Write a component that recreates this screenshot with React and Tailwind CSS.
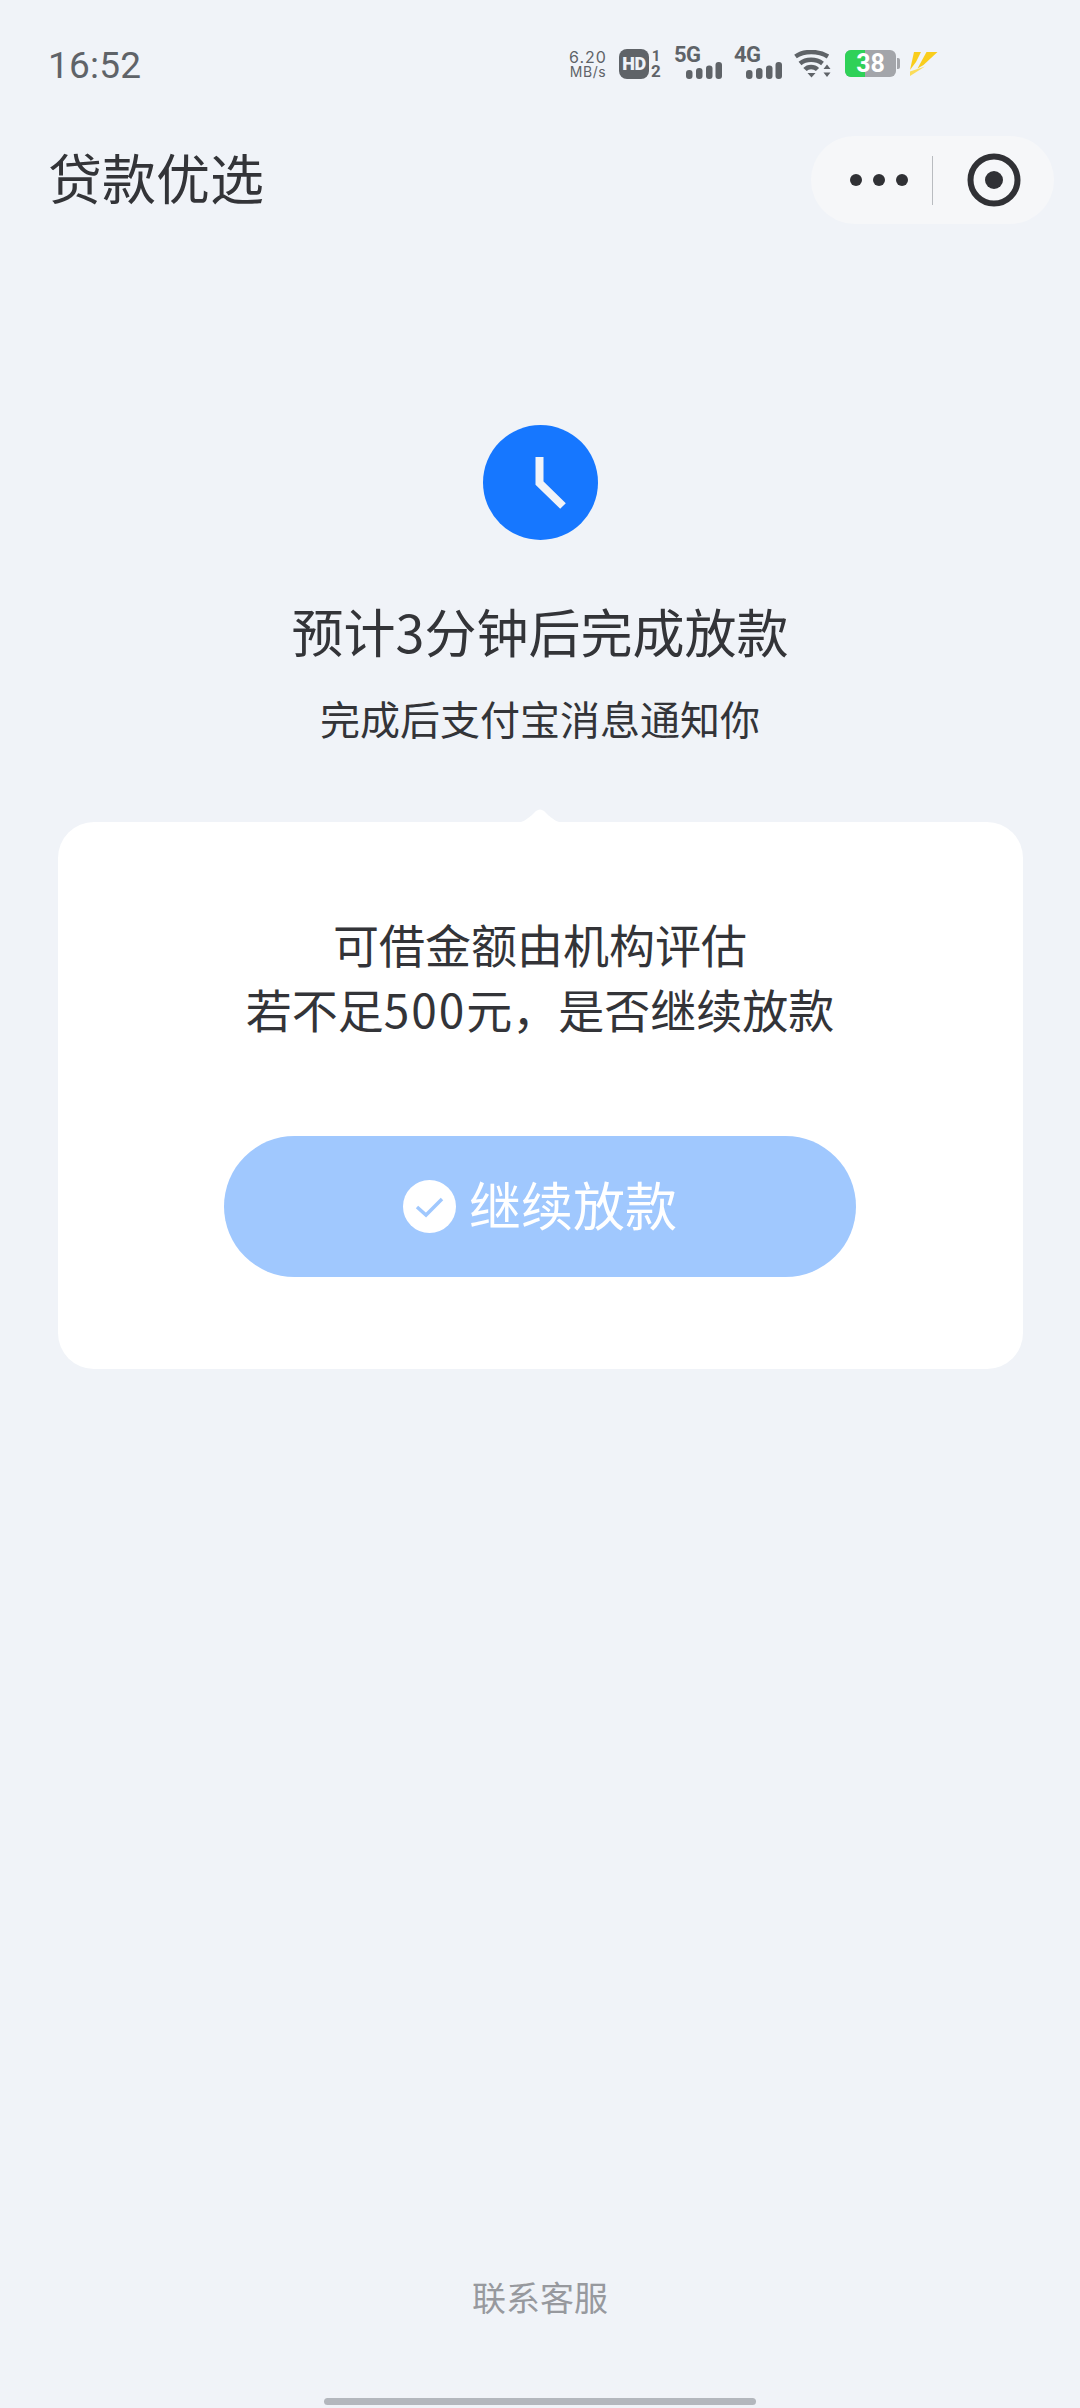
const cjk = "font-['Noto_Sans_CJK_SC','Noto_Sans',sans-serif]";

function Bars() {
  return (
    <svg width="36" height="17" viewBox="0 0 36 17" className="absolute left-[12px] top-[14px]">
      <rect x="0" y="8" width="6.500" height="9" rx="3" fill="#5f6368" />
      <rect x="10" y="6" width="6.500" height="11" rx="3" fill="#5f6368" />
      <rect x="20" y="3.500" width="6.500" height="13.500" rx="3" fill="#5f6368" />
      <rect x="29.500" y="0" width="6.500" height="17" rx="3" fill="#5f6368" />
    </svg>
  );
}

function Signal({ label, className }) {
  return (
    <div className={`relative h-[31px] w-[48px] ${className}`}>
      <span className="absolute left-0 top-[-5px] font-['Roboto',sans-serif] text-[22px] font-bold leading-[24px] tracking-[-0.5px] text-[#5f6368]">
        {label}
      </span>
      <Bars />
    </div>
  );
}

function StatusBar() {
  return (
    <div className="flex h-[31px] items-center pl-[48px] pr-[142px]">
      <span className="mt-[4px] font-['Roboto',sans-serif] text-[37px] leading-[31px] tracking-[0.2px] text-[#5f6368]">16:52</span>
      <div className="ml-auto flex items-center">
        <div className="flex w-[40px] flex-col items-center font-['Inter',sans-serif] text-[#5f6368]">
          <span className="text-[16px] leading-[16px] tracking-[1px]">6.20</span>
          <span className="text-[14px] leading-[14px] tracking-[0.6px]">MB/s</span>
        </div>
        <div className="ml-[11px] flex h-[30px] w-[30px] items-center justify-center rounded-[8px] bg-[#5f6368] font-['Roboto',sans-serif] text-[18px] font-black tracking-[-0.5px] text-[#f0f3f8]">
          HD
        </div>
        <div className="ml-[1px] flex w-[12px] flex-col items-center font-['Roboto',sans-serif] font-bold text-[#5f6368]">
          <span className="text-[15px] leading-[15px]">1</span>
          <span className="text-[17px] leading-[15px]">2</span>
        </div>
        <Signal label="5G" className="ml-[12px]" />
        <Signal label="4G" className="ml-[12px]" />
        <svg width="38" height="28" viewBox="0 0 38 28" className="ml-[12px]">
          <path d="M1.500 6.500 C10 0.500 24 0.500 34 6.500" fill="none" stroke="#5f6368" strokeWidth="4.500" />
          <path d="M6 13.500 C12 8.500 22 8.500 28.500 13.500" fill="none" stroke="#5f6368" strokeWidth="4.500" />
          <path d="M11 19.500 C14 16 20 16 23.500 19.500" fill="none" stroke="#5f6368" strokeWidth="4.500" />
          <path d="M13.500 23 H21.500 L17.500 27.500 Z" fill="#5f6368" />
          <path d="M33 14.500 L36.500 19 H29.500 Z M29.500 22.500 H36.500 L33 27 Z" fill="#5f6368" />
        </svg>
        <div className="relative ml-[13px] flex h-[27px] w-[51px] items-center justify-center overflow-hidden rounded-[6px] bg-[#a3a5aa]">
          <div className="absolute inset-y-0 left-0 w-[20px] bg-[#2fd158]" />
          <span className="relative font-['Roboto',sans-serif] text-[25px] font-bold leading-[27px] text-white">38</span>
        </div>
        <div className="ml-[1px] h-[11px] w-[3px] rounded-r-[2px] bg-[#a3a5aa]" />
        <svg width="30" height="26" viewBox="0 0 30 26" className="ml-[8px]">
          <path d="M6 1 H13 L8 11 L2 19 Z" fill="#f9cd1c" />
          <path d="M18.500 1 H29.500 L15.500 14 L9.500 17.500 Z" fill="#f9cd1c" />
          <path d="M2 20.500 L17 15.500 L2 25 Z" fill="#fbdc5a" />
        </svg>
      </div>
    </div>
  );
}

function NavBar() {
  return (
    <div className="flex items-center justify-between pl-[48px] pr-[26px]">
      <h1 className="mb-[6px] text-[54px] font-normal leading-[82px] text-[#333438]">贷款优选</h1>
      <div className="flex h-[88px] w-[243px] items-center rounded-[44px] bg-[#f6f7f9] pl-[39px]">
        <div className="flex gap-[11px]">
          <span className="h-[12px] w-[12px] rounded-full bg-[#303135]" />
          <span className="h-[12px] w-[12px] rounded-full bg-[#303135]" />
          <span className="h-[12px] w-[12px] rounded-full bg-[#303135]" />
        </div>
        <div className="ml-[24px] h-[49px] w-px bg-[#b9bcc0]" />
        <svg width="54" height="54" viewBox="0 0 54 54" className="ml-[34px]">
          <circle cx="27" cy="27" r="23.5" fill="none" stroke="#303135" strokeWidth="6" />
          <circle cx="27" cy="27" r="9" fill="#303135" />
        </svg>
      </div>
    </div>
  );
}

export default function App() {
  return (
    <div className={`flex h-[2408px] w-[1080px] flex-col items-stretch overflow-hidden bg-[#f0f3f8] ${cjk}`}>
      <div className="pt-[48px]">
        <StatusBar />
      </div>
      <div className="pt-[57px]">
        <NavBar />
      </div>
      <main className="flex flex-1 flex-col items-center pt-[201px]">
        <svg width="115" height="115" viewBox="0 0 115 115">
          <circle cx="57.5" cy="57.5" r="57.5" fill="#1677ff" />
          <path d="M56.5 32 V58 L80 81" fill="none" stroke="#f0f3f8" strokeWidth="8" />
        </svg>
        <h2 className="mt-[56px] text-[52px] font-normal leading-[70px] text-[#333438]">预计3分钟后完成放款</h2>
        <p className="mt-[26px] text-[40px] leading-[52px] text-[#333438]">完成后支付宝消息通知你</p>
        <section className="relative mt-[78px] flex h-[547px] w-[965px] flex-col items-center rounded-[36px] bg-white pt-[89px]">
          <svg width="52" height="14" viewBox="0 0 52 14" className="absolute left-[456px] top-[-13px]">
            <path d="M0 14 C8 14 12 11 18 6 L22 2 C24.500 0 27.500 0 30 2 L34 6 C40 11 44 14 52 14 Z" fill="#ffffff" />
          </svg>
          <p className="text-center text-[46px] leading-[65px] text-[#333438]">
            可借金额由机构评估
            <br />
            若不足<span className="tracking-[2px]">500</span>元，是否继续放款
          </p>
          <button className="mt-[95px] flex h-[141px] w-[632px] items-center justify-center rounded-[70.5px] bg-[#a0c8fe] text-[52px] text-white">
            <svg width="53" height="53" viewBox="0 0 53 53" className="mr-[13px]">
              <circle cx="26.5" cy="26.500" r="26.5" fill="#ffffff" />
              <path d="M14 27 L23 35 L39 19" fill="none" stroke="#a0c8fe" strokeWidth="3.500" />
            </svg>
            <span className="mb-[5px] leading-[70px]">继续放款</span>
          </button>
        </section>
      </main>
      <footer className="flex flex-col items-center">
        <span className="text-[34px] leading-[46px] text-[#97999e]">联系客服</span>
        <div className="mb-[3px] mt-[78px] h-[7px] w-[432px] rounded-full bg-[#b3b7bd]" />
      </footer>
    </div>
  );
}
